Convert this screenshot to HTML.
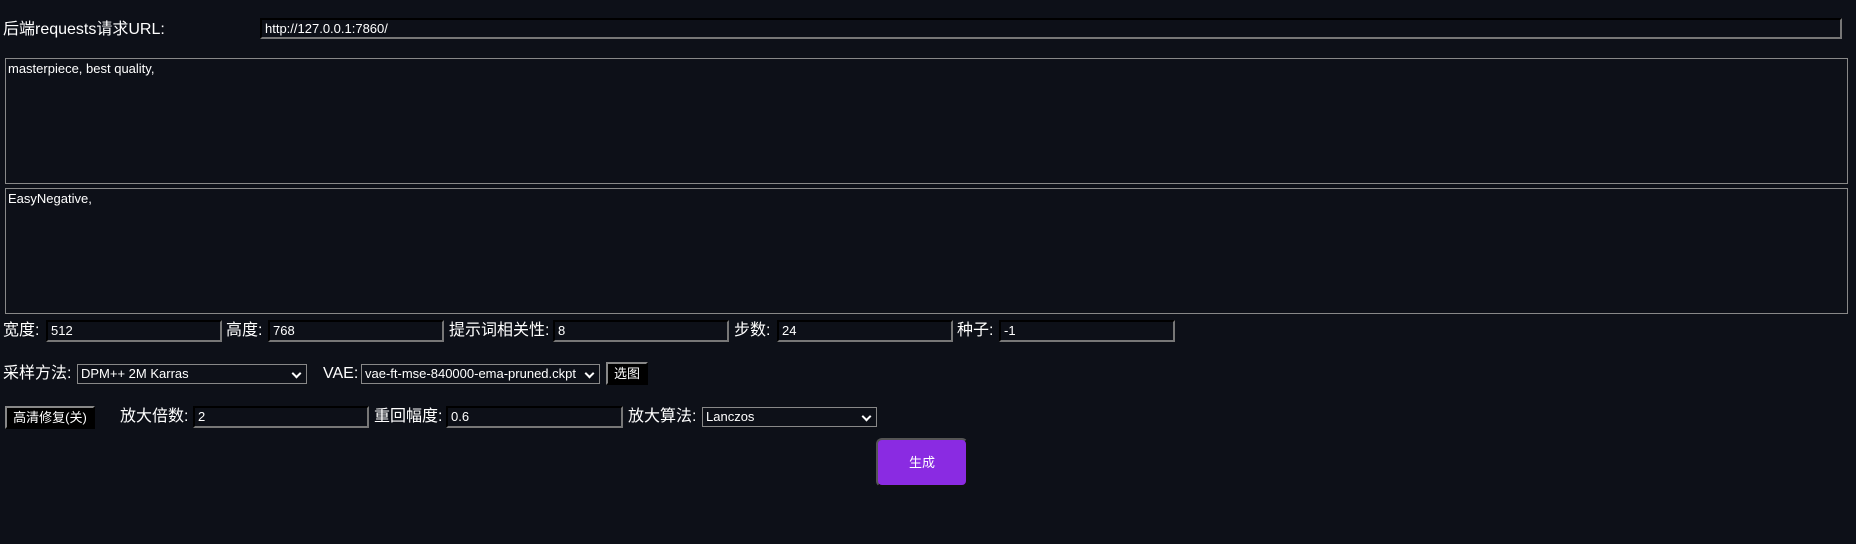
<!DOCTYPE html>
<html><head><meta charset="utf-8"><style>
html,body{margin:0;padding:0;width:1856px;height:544px;background:#0d1018;overflow:hidden;}
body{font-family:"Liberation Sans","Noto Sans CJK SC",sans-serif;color:#fff;position:relative;}
.a{position:absolute;}
.lbl{font-size:16px;line-height:20px;white-space:nowrap;}
.in{box-sizing:border-box;background:#0d1018;border:2px inset #777;border-top-color:#333;border-left-color:#333;border-right-color:#777;border-bottom-color:#777;font-size:13px;line-height:16px;padding:0 3px;color:#fff;white-space:nowrap;overflow:hidden;}
.ta{box-sizing:border-box;border:1px solid #888;background:#0d1018;font-size:13px;padding:2px 2px;}
.sel{box-sizing:border-box;border:1px solid #888;background:#0d1018;font-size:13px;line-height:18px;padding:0 3px;color:#fff;}
.sel:after{content:"";position:absolute;right:6px;top:5px;width:5px;height:5px;border-right:2px solid #fff;border-bottom:2px solid #fff;transform:rotate(45deg);}
.btn{box-sizing:border-box;background:#000;border:2px outset #555;border-top-color:#333;border-left-color:#333;border-right-color:#222;border-bottom-color:#222;font-size:13px;text-align:center;}
</style></head><body>
<div class="a lbl" style="left:3px;top:20px;">后端requests请求URL:</div>
<div class="a in" style="left:260px;top:18px;width:1582px;height:21px;line-height:17px;">http://127.0.0.1:7860/</div>
<div class="a ta" style="left:5px;top:58px;width:1843px;height:126px;">masterpiece, best quality,</div>
<div class="a ta" style="left:5px;top:188px;width:1843px;height:126px;">EasyNegative,</div>

<div class="a lbl" style="left:3px;top:321px;">宽度:</div>
<div class="a in" style="left:46px;top:320px;width:176px;height:22px;line-height:18px;">512</div>
<div class="a lbl" style="left:226px;top:321px;">高度:</div>
<div class="a in" style="left:268px;top:320px;width:176px;height:22px;line-height:18px;">768</div>
<div class="a lbl" style="left:449px;top:321px;">提示词相关性:</div>
<div class="a in" style="left:553px;top:320px;width:176px;height:22px;line-height:18px;">8</div>
<div class="a lbl" style="left:734px;top:321px;">步数:</div>
<div class="a in" style="left:777px;top:320px;width:176px;height:22px;line-height:18px;">24</div>
<div class="a lbl" style="left:957px;top:321px;">种子:</div>
<div class="a in" style="left:999px;top:320px;width:176px;height:22px;line-height:18px;">-1</div>

<div class="a lbl" style="left:3px;top:364px;">采样方法:</div>
<div class="a sel" style="left:77px;top:364px;width:230px;height:20px;">DPM++ 2M Karras</div>
<div class="a lbl" style="left:323px;top:364px;">VAE:</div>
<div class="a sel" style="left:361px;top:364px;width:239px;height:20px;padding-right:16px;">vae-ft-mse-840000-ema-pruned.ckpt</div>
<div class="a btn" style="left:606px;top:362px;width:42px;height:23px;line-height:19px;">选图</div>

<div class="a btn" style="left:5px;top:406px;width:90px;height:23px;line-height:19px;">高清修复(关)</div>
<div class="a lbl" style="left:120px;top:407px;">放大倍数:</div>
<div class="a in" style="left:193px;top:406px;width:176px;height:22px;line-height:18px;">2</div>
<div class="a lbl" style="left:374px;top:407px;">重回幅度:</div>
<div class="a in" style="left:446px;top:406px;width:177px;height:22px;line-height:18px;">0.6</div>
<div class="a lbl" style="left:628px;top:407px;">放大算法:</div>
<div class="a sel" style="left:702px;top:407px;width:175px;height:20px;">Lanczos</div>

<div class="a" style="left:876px;top:438px;width:92px;height:49px;box-sizing:border-box;background:#8a2be2;border:2px solid #555;border-right-color:#111;border-bottom-color:#111;border-radius:6px;font-size:13px;line-height:45px;text-align:center;">生成</div>
</body></html>
